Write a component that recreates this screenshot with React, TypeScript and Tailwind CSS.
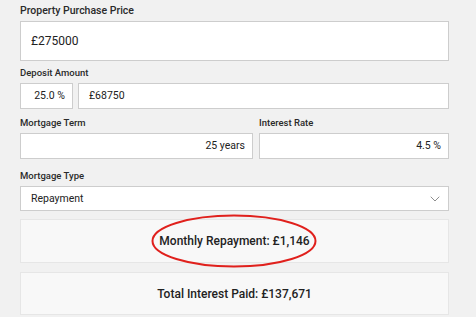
import { ChevronDown } from 'lucide-react';

const labelCls = 'block text-[9.5px] leading-[12px] font-medium text-[#2a2a2a]';
const boxCls = 'bg-white border border-[#cdcdcd] flex items-center text-[#222]';
const resultCls = 'bg-[#f8f8f8] border border-[#e6e6e6] flex items-center justify-center text-[12px] font-medium text-[#222]';

export default function App() {
  return (
    <div className="w-[476px] h-[317px] bg-[#f1f1f1] px-5 pt-[4px] font-['Roboto',sans-serif] overflow-hidden">
      <div className="w-[429px]">
        <label className="block text-[10.5px] leading-[14px] font-medium text-[#2a2a2a]">Property Purchase Price</label>
        <div className={`${boxCls} mt-[3px] h-[40px] px-[10px] text-[12px]`}>£275000</div>

        <label className={`${labelCls} mt-[6px]`}>Deposit Amount</label>
        <div className="mt-[4px] flex gap-[5px] h-[26px]">
          <div className={`${boxCls} w-[53px] justify-end pr-[7px] text-[10.5px]`}>25.0 %</div>
          <div className={`${boxCls} flex-1 px-[10px] text-[10.5px]`}>£68750</div>
        </div>

        <div className="mt-[8px] flex gap-[6px]">
          <div className="w-[233px]">
            <label className={labelCls}>Mortgage Term</label>
            <div className={`${boxCls} mt-[4px] h-[26px] justify-end pr-[7px] text-[10.5px]`}>25 years</div>
          </div>
          <div className="flex-1">
            <label className={labelCls}>Interest Rate</label>
            <div className={`${boxCls} mt-[4px] h-[26px] justify-end pr-[7px] text-[10.5px]`}>4.5 %</div>
          </div>
        </div>

        <label className={`${labelCls} mt-[11px]`}>Mortgage Type</label>
        <div className={`${boxCls} mt-[4px] h-[25px] justify-between pl-[10px] pr-[5px] text-[10.5px]`}>
          <span>Repayment</span>
          <ChevronDown className="w-[16px] h-[16px] text-[#777]" strokeWidth={1.25} />
        </div>

        <div className={`${resultCls} relative mt-[8px] h-[44px]`}>
          Monthly Repayment: £1,146
          <svg className="absolute left-[130px] top-[-6px]" width="166" height="54" viewBox="0 0 166 54">
            <ellipse cx="83" cy="27" rx="81.5" ry="25.5" fill="none" stroke="#e0201c" strokeWidth="2" />
          </svg>
        </div>

        <div className={`${resultCls} mt-[9px] h-[43px]`}>
          Total Interest Paid: £137,671
        </div>
      </div>
    </div>
  );
}
